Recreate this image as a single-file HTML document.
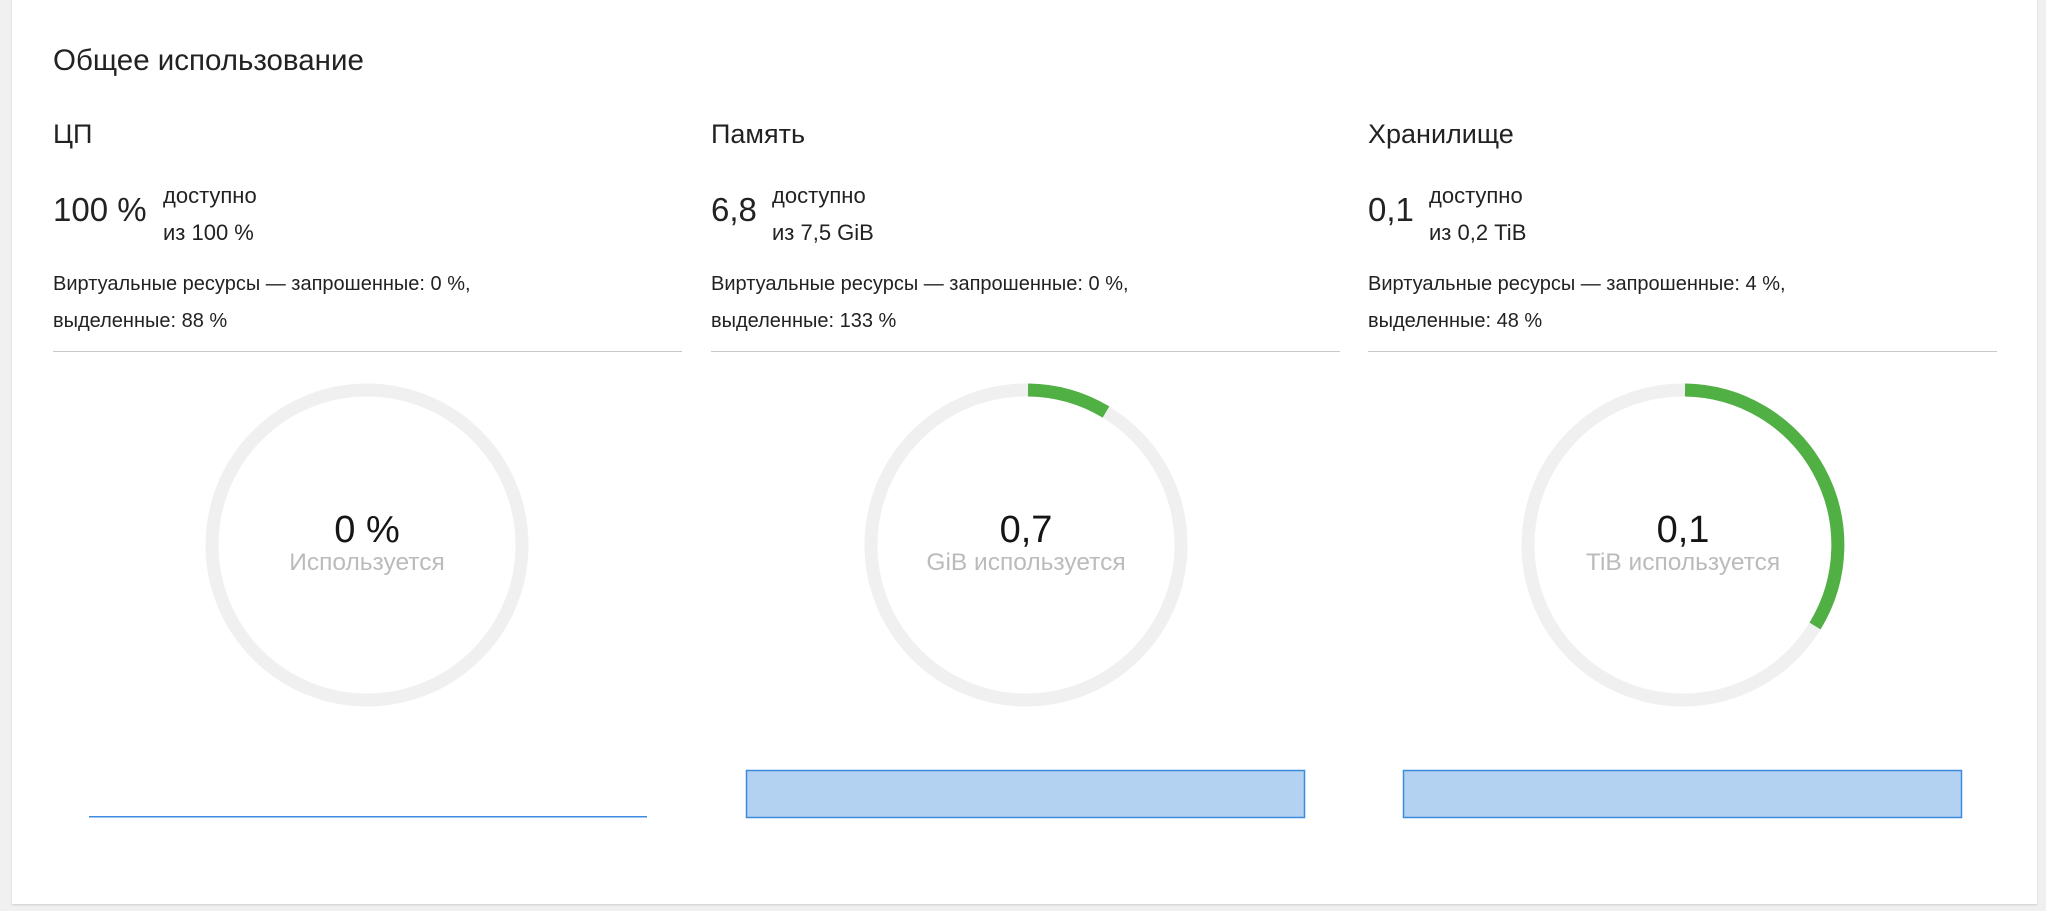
<!DOCTYPE html>
<html><head><meta charset="utf-8"><style>
body{margin:0;width:2046px;height:911px;background:#f0f0f0;font-family:"Liberation Sans",sans-serif;color:#222;position:relative;overflow:hidden}
.card{position:absolute;left:12px;top:0;width:2025px;height:904px;background:#fff;box-shadow:0 1px 2px rgba(0,0,0,.15)}
.t{position:absolute;white-space:nowrap}
.hr{position:absolute;top:351px;width:629px;height:1px;background:#c8c8c8}
svg{position:absolute;left:0;top:0}
.h{font-size:27px;top:119px}
.n{font-size:33px;top:191px}
.s1{font-size:22px;top:183px}
.s2{font-size:22px;top:220px}
</style></head><body>
<div class="card"></div>
<div class="t" style="left:53px;top:44px;font-size:29.5px">Общее использование</div>

<div class="t h" style="left:53px">ЦП</div>
<div class="t n" style="left:53px">100 %</div>
<div class="t s1" style="left:163px">доступно</div>
<div class="t s2" style="left:163px">из 100 %</div>
<div class="t" style="left:53px;top:266px;font-size:20px;line-height:37px">Виртуальные ресурсы — запрошенные: 0 %,<br>выделенные: 88 %</div>
<div class="hr" style="left:53px"></div>

<div class="t h" style="left:711px">Память</div>
<div class="t n" style="left:711px">6,8</div>
<div class="t s1" style="left:772px">доступно</div>
<div class="t s2" style="left:772px">из 7,5 GiB</div>
<div class="t" style="left:711px;top:266px;font-size:20px;line-height:37px">Виртуальные ресурсы — запрошенные: 0 %,<br>выделенные: 133 %</div>
<div class="hr" style="left:711px"></div>

<div class="t h" style="left:1368px">Хранилище</div>
<div class="t n" style="left:1368px">0,1</div>
<div class="t s1" style="left:1429px">доступно</div>
<div class="t s2" style="left:1429px">из 0,2 TiB</div>
<div class="t" style="left:1368px;top:266px;font-size:20px;line-height:37px">Виртуальные ресурсы — запрошенные: 4 %,<br>выделенные: 48 %</div>
<div class="hr" style="left:1368px"></div>

<svg width="2046" height="911">
<g fill="none" stroke-width="13">
<circle cx="367" cy="545" r="155" stroke="#f0f0f0"/>
<circle cx="1026" cy="545" r="155" stroke="#f0f0f0"/>
<path d="M1028 390 A155 155 0 0 1 1106 412" stroke="#51b044"/>
<circle cx="1683" cy="545" r="155" stroke="#f0f0f0"/>
<path d="M1685 390 A155 155 0 0 1 1815 626" stroke="#51b044"/>
</g>
<g font-family="Liberation Sans,sans-serif" text-anchor="middle">
<text x="367" y="542" font-size="38" fill="#151515">0 %</text>
<text x="367" y="570" font-size="24.5" fill="#bbb">Используется</text>
<text x="1026" y="542" font-size="38" fill="#151515">0,7</text>
<text x="1026" y="570" font-size="24.5" fill="#bbb">GiB используется</text>
<text x="1683" y="542" font-size="38" fill="#151515">0,1</text>
<text x="1683" y="570" font-size="24.5" fill="#bbb">TiB используется</text>
</g>
<rect x="89" y="816" width="558" height="1.5" fill="#3c8be0"/>
<rect x="746.5" y="770.5" width="558" height="47" fill="#b3d1f0" stroke="#3c8be0" stroke-width="1.5"/>
<rect x="1403.5" y="770.5" width="558" height="47" fill="#b3d1f0" stroke="#3c8be0" stroke-width="1.5"/>
</svg>
</body></html>
